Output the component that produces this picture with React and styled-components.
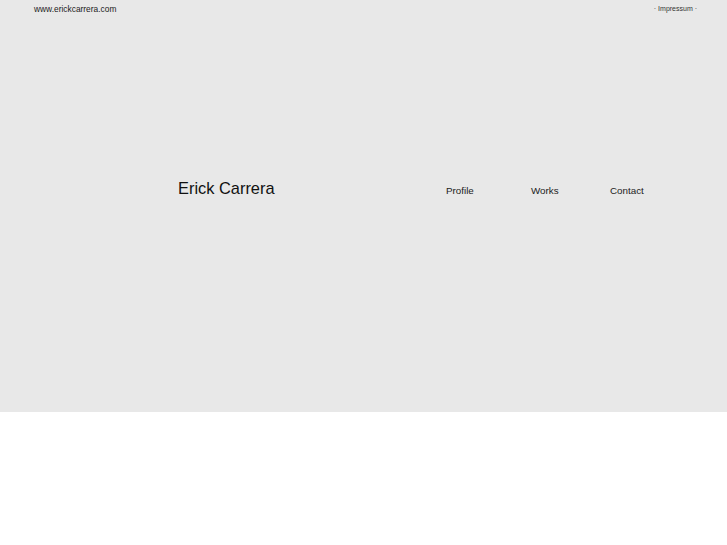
import React from 'react';
import styled, { createGlobalStyle } from 'styled-components';

const GlobalStyle = createGlobalStyle`
    html, body {
        margin:0;
        padding:0;
        background:#fff;
        font-family:"Liberation Sans", Arial, sans-serif;
    }
`

const Hero = styled.div`
    height:412px;
    background:#e8e8e8;
    display:flex;
    flex-direction:column;
`

const TopBar = styled.div`
    display:flex;
    justify-content:space-between;
    align-items:center;
    height:17px;
    padding:0 30px 0 34px;

    .domain{
        font-size:8.4px;
        color:#222;
    }
    .impressum{
        font-size:7px;
        color:#333;
        margin-top:-1px;
    }
`

const Main = styled.div`
    display:flex;
    align-items:baseline;
    padding:161px 0 0 178px;
`

const Name = styled.div`
    width:268px;
    font-size:16.4px;
    line-height:20px;
    color:#111;
`

const Nav = styled.nav`
    display:grid;
    grid-template-columns:85px 79px auto;
`

const NavLink = styled.a`
    font-size:9.8px;
    color:#222;
    text-decoration:none;
    cursor:pointer;
`

const App = () => (
    <>
        <GlobalStyle />
        <Hero>
            <TopBar>
                <span className="domain">www.erickcarrera.com</span>
                <span className="impressum">· Impressum ·</span>
            </TopBar>
            <Main>
                <Name>Erick Carrera</Name>
                <Nav>
                    <NavLink>Profile</NavLink>
                    <NavLink>Works</NavLink>
                    <NavLink>Contact</NavLink>
                </Nav>
            </Main>
        </Hero>
    </>
);

export default App;
